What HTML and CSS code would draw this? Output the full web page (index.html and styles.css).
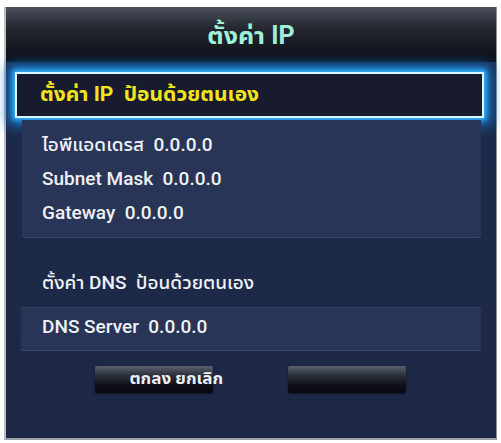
FILE: index.html
```html
<!DOCTYPE html>
<html lang="th">
<head>
<meta charset="utf-8">
<title>ตั้งค่า IP</title>
<link rel="stylesheet" href="styles.css">
</head>
<body>
<div class="panel">
  <div class="titlebar"><h1 class="title">ตั้งค่า IP</h1></div>
  <div class="selected">ตั้งค่า IP&nbsp; ป้อนด้วยตนเอง</div>
  <div class="group">
    <div class="row">ไอพีแอดเดรส&nbsp; 0.0.0.0</div>
    <div class="row">Subnet Mask&nbsp; 0.0.0.0</div>
    <div class="row">Gateway&nbsp; 0.0.0.0</div>
  </div>
  <div class="label">ตั้งค่า DNS&nbsp; ป้อนด้วยตนเอง</div>
  <div class="group dns">
    <div class="row">DNS Server&nbsp; 0.0.0.0</div>
  </div>
  <div class="buttons">
    <div class="btn btn-text">ตกลง ยกเลิก</div>
    <div class="btn"></div>
  </div>
</div>
</body>
</html>
```
FILE: styles.css
```css
html, body {
  margin: 0;
  padding: 0;
  background: #ffffff;
}
body {
  font-family: Roboto, "Noto Sans Thai UI", "Noto Sans Thai", "Noto Sans", "DejaVu Sans", sans-serif;
}
.panel {
  margin: 7px 4px 0 4px;
  width: 493px;
  height: 433px;
  box-sizing: border-box;
  border-left: 2px solid #b9bec7;
  border-right: 1px solid #8c929c;
  border-bottom: 2px solid #9aa0aa;
  background: linear-gradient(#1d2a49, #1c2846);
  display: flex;
  flex-direction: column;
}
.titlebar {
  height: 55px;
  background: linear-gradient(#4a4f5a 0%, #23262f 40%, #0b0d15 100%);
  display: flex;
  align-items: center;
  justify-content: center;
}
.title {
  margin: 0;
  font-size: 25px;
  font-weight: 700;
  color: #a0efd9;
  padding-bottom: 2px;
}
.selected {
  margin: 10px 12px 0 9px;
  height: 46px;
  box-sizing: border-box;
  border: 2px solid #d8f8ff;
  background: #181a2d;
  box-shadow: 0 0 5px 2px #3bbcff, 0 0 12px 7px #1377cc;
  padding-left: 23px;
  line-height: 40px;
  font-size: 21px;
  font-weight: 700;
  color: #f2e41c;
  white-space: nowrap;
}
.group {
  margin: 2px 15px 0 16px;
  padding: 8px 0 8px 20px;
  background: #283556;
  border-radius: 0 0 4px 4px;
  box-shadow: inset 0 -1px 0 #3a4868;
}
.row {
  line-height: 34px;
  font-size: 19px;
  font-weight: 500;
  color: #eef1f6;
  white-space: nowrap;
}
.label {
  margin: 30px 0 0 36px;
  line-height: 30px;
  font-size: 19px;
  font-weight: 500;
  color: #eef1f6;
  white-space: nowrap;
}
.group.dns {
  margin: 9px 15px 0 15px;
  padding: 0 0 6px 21px;
  border-radius: 2px;
  border-top: 1px solid #33405e;
}
.group.dns .row {
  line-height: 37px;
}
.buttons {
  margin-top: 15px;
  display: flex;
  justify-content: center;
  gap: 75px;
  padding-right: 2px;
}
.btn {
  width: 118px;
  height: 27px;
  background: linear-gradient(#5a6170 0%, #2b2f3a 35%, #0e1118 70%, #07090e 100%);
  border-radius: 2px;
  box-shadow: 0 1px 2px rgba(0,0,0,0.5);
}
.btn-text {
  box-sizing: border-box;
  padding-left: 35px;
  line-height: 25px;
  font-size: 17px;
  font-weight: 700;
  color: #eceff4;
  white-space: nowrap;
}
```
